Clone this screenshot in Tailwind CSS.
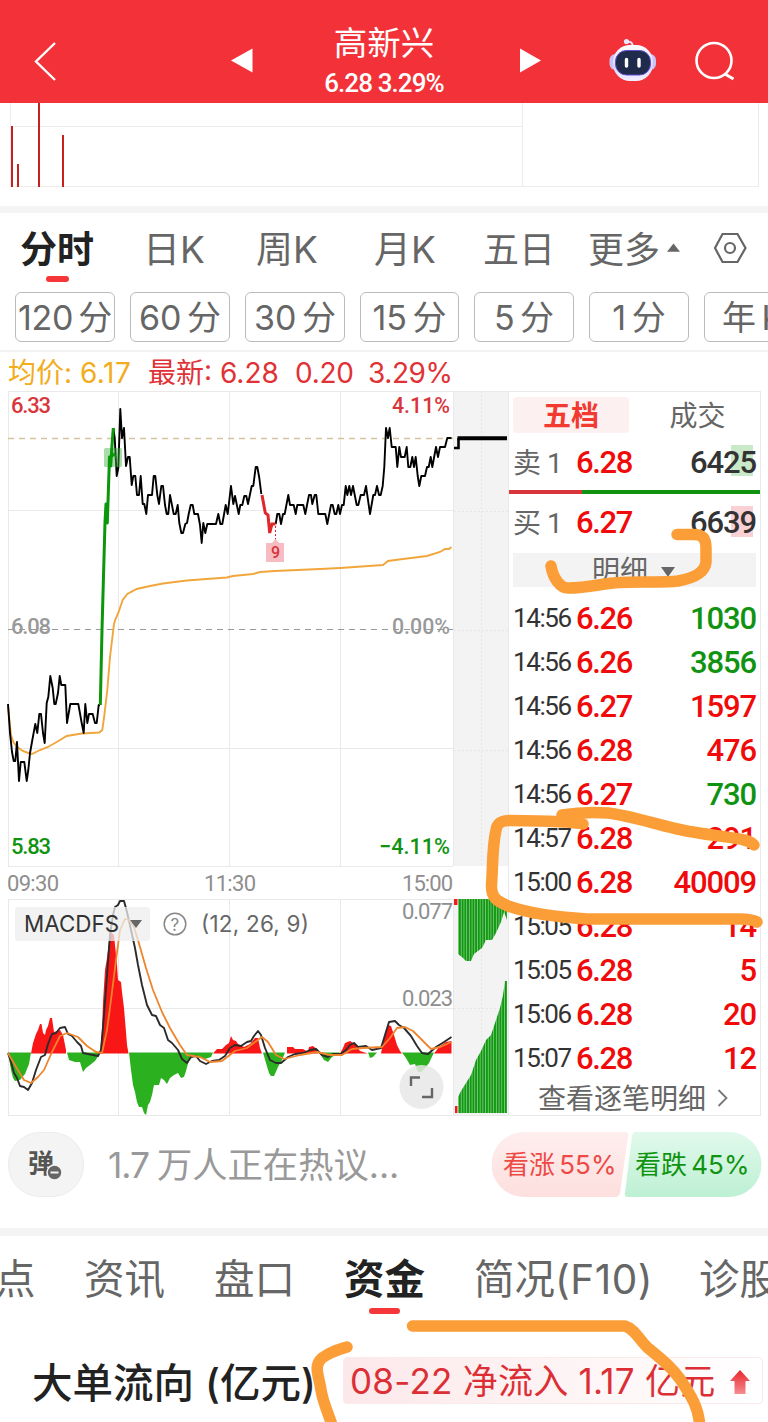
<!DOCTYPE html>
<html lang="zh-CN">
<head>
    <meta charset="UTF-8">
    <meta name="viewport" content="width=device-width, initial-scale=1.0">
    <title>高新兴 6.28 3.29%</title>
    <script src="https://cdn.jsdelivr.net/npm/@tailwindcss/browser@4"></script>
</head>
<body class="relative w-[768px] h-[1422px] overflow-hidden bg-white text-[#666] whitespace-nowrap font-['Inter','Noto_Sans_CJK_SC',sans-serif]">
    <!-- Header -->
    <header class="h-[103px] bg-[#f33138] text-white flex items-center">
        <svg class="w-[60px] h-[103px] ml-5" viewBox="20 0 60 103" fill="none" stroke="#fff" stroke-width="2.4"><path d="M55 43 36 61.500 55 80"/></svg>
        <svg class="w-[24px] h-[103px] ml-[150px]" viewBox="230 0 24 103" fill="#fff"><path d="M231 60.500 252.500 48.500V72.500Z"/></svg>
        <div class="w-[260px] mr-1 flex flex-col items-center">
            <h1 class="text-[33.500px] leading-[40px] font-normal mt-[22px]">高新兴</h1>
            <p class="text-[26px] leading-[40px] font-medium font-['Roboto',sans-serif] tracking-[-0.900px]">6.28 3.29%</p>
        </div>
        <svg class="w-[24px] h-[103px]" viewBox="518 0 24 103" fill="#fff"><path d="M541 60.500 520 48.500V72.500Z"/></svg>
        <svg class="w-[56px] h-[103px] ml-[62px]" viewBox="604 0 56 103">
            <defs>
                <linearGradient id="shell" x1="0" y1="0" x2="0" y2="1"><stop offset="0" stop-color="#fff"/><stop offset=".6" stop-color="#dcd6fb"/><stop offset="1" stop-color="#f3f0ff"/></linearGradient>
            </defs>
            <path d="M633 46C632 42 630 41 627 42" fill="none" stroke="#e4dcfa" stroke-width="2"/>
            <circle cx="626.500" cy="41.500" r="2.600" fill="#e9e6ff"/>
            <rect x="609.500" y="54" width="46.500" height="16" rx="6" fill="#c9c2f7"/>
            <rect x="613" y="45" width="40" height="36" rx="17" fill="url(#shell)"/>
            <rect x="615.500" y="50.500" width="35" height="24.500" rx="11" fill="#202b4c" stroke="#5f4fd0"/>
            <path d="M626.500 59.500V66M639 59.500V66" stroke="#fff" stroke-width="3.400" stroke-linecap="round"/>
        </svg>
        <svg class="w-[50px] h-[103px] ml-[30px]" viewBox="690 0 50 103" fill="none" stroke="#fff" stroke-width="2.600"><circle cx="714" cy="60.500" r="17.500"/><path d="M725 74 733.500 79" stroke-width="3"/></svg>
    </header>

    <!-- Tail of the previous chart -->
    <svg class="block w-full h-[103px]" viewBox="0 103 768 103" shape-rendering="crispEdges">
        <path d="M10.500 103V186.500H758.500V103M522.500 103V186M10 126.500H522" fill="none" stroke="#ececec"/>
        <path d="M11.500 126V187M17.500 164V187M38.500 103V187M62.500 135V187" stroke="#c8201f" stroke-width="2"/>
    </svg>
    <div class="h-[7px] bg-[#f4f4f4]"></div>

    <!-- Period tabs -->
    <nav class="h-[79px] pl-[20px] pt-[12px] grid grid-cols-[123px_113px_118px_109px_105px_125px_54px] text-[37px] leading-[50px]">
        <div class="text-[#222] font-bold">分时<div class="w-[23px] h-[6px] rounded-full bg-[#f5373a] ml-[26px] mt-px"></div></div>
        <div>日K</div>
        <div>周K</div>
        <div>月K</div>
        <div class="text-[36px]">五日</div>
        <div class="flex text-[36px]">更多<svg class="w-[13px] h-[50px] ml-[7px]" viewBox="0 0 14 50" fill="#666"><path d="M7 18 14 27H0Z"/></svg></div>
        <svg class="w-[34px] h-[50px]" viewBox="-0.500 1 34 50" fill="none" stroke="#666" stroke-width="2.200"><path d="M9 10H24L32 24 24 38H9L1.500 24Z"/><circle cx="16.500" cy="24" r="5"/></svg>
    </nav>

    <div class="h-[60px] pl-[15px] flex gap-[15px] border-b-2 border-[#f3f3f3] text-[34px] leading-[49px] text-center [word-spacing:-4px] overflow-hidden">
        <div class="w-[100px] h-[50px] shrink-0 border border-[#bbb] rounded-md flex justify-center tracking-[-0.300px]">120 分</div>
        <div class="w-[100px] h-[50px] shrink-0 border border-[#bbb] rounded-md">60 分</div>
        <div class="w-[100px] h-[50px] shrink-0 border border-[#bbb] rounded-md">30 分</div>
        <div class="w-[99px] h-[50px] shrink-0 border border-[#bbb] rounded-md">15 分</div>
        <div class="w-[100px] h-[50px] shrink-0 border border-[#bbb] rounded-md">5 分</div>
        <div class="w-[100px] h-[50px] shrink-0 border border-[#bbb] rounded-md">1 分</div>
        <div class="w-[100px] h-[50px] shrink-0 border border-[#bbb] rounded-md text-left pl-[17px]">年 K</div>
    </div>

    <div class="h-[39px] pl-2 flex text-[28px] leading-[42px] text-[#e03236]">
        <div class="w-[140px] text-[#f2ac1c]">均价: <span class="tracking-[0.500px]">6.17</span></div>
        <div class="w-[147px]">最新: 6.28</div>
        <div class="w-[73px] tracking-[-0.300px]">0.20</div>
        <div class="tracking-[-0.400px]">3.29%</div>
    </div>

    <main class="flex h-[726px]">
        <!-- Minute chart and MACD -->
        <svg class="w-[508px] h-[726px] shrink-0" viewBox="0 391 508 726" fill="none">
            <defs>
                <pattern id="bars" width="2.700" height="10" patternUnits="userSpaceOnUse"><rect width="2.700" height="10" fill="#7cc67c"/><rect width="1.800" height="10" fill="#0f990f"/></pattern>
            </defs>
            <path d="M454 391H508V866H454ZM454 899H508V1115H454Z" fill="#f3f3f3"/>
            <path d="M8 391.500H508M8 510.500H453M8 748.500H453M8 866.500H453M8.500 391V866M118.500 391V866M229.500 391V866M340.500 391V866M453.500 391V866M8 899.500H508M8 1008.500H453M8 1115.500H508M8.500 899V1115M118.500 899V1115M229.500 899V1115M340.500 899V1115M453.500 899V1115" stroke="#e9e9e9"/>
            <path d="M481.500 391V866M454 511.500H508M454 630.500H508M454 750.500H508M481.500 899V1115M454 1008.500H508" stroke="#e6e6e6" stroke-dasharray="2 2"/>
            <path d="M8 438.500H453" stroke="#d8c3a0" stroke-width="1.400" stroke-dasharray="6 5"/>
            <path d="M8 629.500H453" stroke="#999" stroke-width="1.200" stroke-dasharray="6 5"/>

            <!-- average price -->
            <path d="M8 706 11 735 13.300 742 17.300 747 22.700 751 28.300 753 32 754 40 750 48 747 56.700 742 66.700 736 81.700 733.500 99.300 732.500 102.300 730 104 718 107.300 690 110 657 114 624 115.500 619 118.300 613 122.700 600 127.300 594 136.700 589 150 586 163 583.500 186.700 580.500 226.700 577.500 233 576 253 574 260 572 275 571 320 569 340 568 383 565 388 561 403 559 427 556 440 552 445 549 449 549 451.500 547" stroke="#f1a63c" stroke-width="1.900"/>
            <!-- price -->
            <g stroke="#000" stroke-width="1.900" stroke-linejoin="round">
                <path d="M8 704 10 733 12 752 13.700 761H15.300L17 742 19 781 20.700 762H24.300L26.700 781 28.300 770 30 753 32.700 738 35.300 724 37.300 733 39.300 714H41L43 733 44.700 743 46.700 703 48.300 697 50.300 676 52.700 688 54.300 704H55.700L58 693 59.700 676 61.300 685H65.300L67 723 70.300 704H78.300L81.700 723 83.700 733 85.300 704 87.300 723 89 714H92.700L95 723H96.700L98.700 705H100"/>
                <path d="M113.300 428 114.700 438 116.700 476 118.300 468 120.300 409 122 438 124 428 126 466 128 457H129.700L131.700 485 133.300 476H135.300L137 495H139L140.700 476 142.700 504H144.300L146.300 514 148 495H152L153.700 476H155.300L157.300 495 159 504 161.300 486H163L165 505 166.700 514H168.300L170 495 173.700 514H175.700L177.700 505 179.300 523 181.300 533H183L185.300 524 187 523 188.700 514 190.700 505H192.700L194.300 514H198L200 525 201.700 543 203.300 523 205.300 533 207.300 524H216L218.300 514 220.300 524H222.300L225.700 505 227.700 514 231 486 233.300 504 235 496 238.700 514 240.300 505H242.300L244.300 496H246.300L248 504 251.700 486H253.300L255.700 467H257.300L259.300 478 261.300 494"/>
                <path d="M275.700 524 277.300 514H279.300L281 524 283 514H284.700L288.300 495 290 505H293.700L295.700 514 297.300 505H303.300L305.300 514 309 495H311L312.300 504 314.700 495H316.300L318.300 514H325.300L327.300 524 331 505H332.700L334.700 514H336.300L338.300 505 340 514 342 505H343.700L345.700 486 347.300 495 349.300 486 351 495 353 486 356.700 505H358.300L360.700 495H364L366 486 370 514 373.300 495H375L377 486 379 495H380.700L382.700 486 384.300 467 386 428 388 438 389.700 428 391.700 447H395.700L397.300 467 399.300 447 401 457H404.700L406.700 447 408.300 467H410.300L412.300 457 414 467 415.700 457 417.700 476 419.300 486 421.300 476H425L427 467H428.700L430.700 457 432.300 467 436 447 438 457 440 447H445L447.300 438H451.500"/>
            </g>
            <path d="M454 448H458.500V438" stroke="#000" stroke-width="2.600"/>
            <path d="M457.500 438.300H507" stroke="#000" stroke-width="4"/>
            <rect x="104" y="448" width="18" height="19" rx="1.500" fill="#3fb23f" fill-opacity=".45"/>
            <path d="M100.300 705 102 630 105 522 106 504 107.300 523 109.500 457 110.700 466 112 445 113.300 428" stroke="#0b960b" stroke-width="3" stroke-linejoin="round"/>
            <path d="M112 457 114 454 116 457" stroke="#0b960b" stroke-width="2"/>
            <path d="M262 495 265.300 513 268 515 269.700 533 272 524H275.500" stroke="#e0282c" stroke-width="3"/>
            <path d="M275.500 526V540" stroke="#e0282c" stroke-dasharray="2 2"/>
            <path d="M266 543H272L275.500 539 279 543H284V562H266Z" fill="#f7bcc2"/>

            <!-- MACD histogram -->
            <g fill="#f91616">
                <path d="M31 1053.500 33 1043 36 1034 38 1030 40 1024H41.500L43 1033 45 1035 46 1030 48 1026 50 1018H52L54 1032 60 1030 63 1035 66 1050V1053.500Z"/>
                <path d="M100 1053.500 102 1030 103 1002 105 970 107 958 109 941 111 932 114 935 115 945 117 965 118 980 121 982 122 992 124 1008 126 1032 127 1045 128.500 1053.500Z"/>
                <path d="M213 1053.500 217 1049H222L226 1045 229 1043 231 1036 233 1040 236 1041 238 1044 244 1047 250 1044 255 1038H258L260 1048 262 1053.500Z"/>
                <path d="M287 1053.500V1047H293L295 1049H303L308 1052 309 1047 313 1046 318 1050V1053.500Z"/>
                <path d="M340 1053.500 343 1048 345 1043 350 1041 355 1044 360 1051 368 1053.500Z"/>
                <path d="M381 1053.500 383 1043 385 1035 388 1025 391 1026 394 1035 397 1045 400 1051 402 1053.500Z"/>
                <path d="M434 1053.500 440 1046 446 1042 451.500 1041V1053.500Z"/>
            </g>
            <g fill="#2bb01f">
                <path d="M8 1052.500 11 1070 13 1078 15 1081 20 1080 25 1074 29 1064 31 1052.500Z"/>
                <path d="M67 1052.500 69 1060 75 1062H80L83 1072 86 1068 90 1065 95 1061 99 1055V1052.500Z"/>
                <path d="M129 1052.500 131 1070 133 1085 135 1092 137 1102 139 1107H142L144 1113 146 1115 148 1105 150 1102 152 1095 154 1085H159L161 1078 164 1080 167 1084 170 1078 174 1075 178 1073 181 1078 184 1077 186 1071 189 1060 192 1055 205 1059 211 1057 213 1052.500Z"/>
                <path d="M263 1052.500 266 1063 269 1073 271 1076H274L278 1067 282 1060 285 1052.500Z"/>
                <path d="M319 1052.500 324 1060 328 1062 332 1057 340 1052.500Z"/>
                <path d="M368 1052.500 370 1058 373 1057 377 1052.500Z"/>
                <path d="M402 1052.500 406 1058 410 1065 415 1064 418 1072H421L425 1068 429 1063 434 1052.500Z"/>
            </g>
            <path d="M8 1053 11 1062 14 1073 17 1078 20 1086 24 1087 28 1090 32 1083 36 1070 41 1057 45 1055 48 1044 52 1034 56 1033 60 1028 65 1027 68 1034 72 1036 77 1042 81 1046 83 1053 88 1054 93 1055 98 1056 101 1050 104 1015 107 975 110 935 113 915 115 907 118 905 120 901H124L127 912 131 930 135 948 138 965 142 985 147 1005 152 1015 156 1016 160 1025 164 1028 168 1040 172 1043 178 1050 182 1059 187 1063 191 1057 196 1056 200 1061 206 1064 212 1061 219 1060 225 1056 230 1048 235 1045 241 1046 247 1042 251 1041 254 1036 258 1031 261 1035 265 1048 270 1060 276 1063H281L288 1057 295 1054 303 1053 310 1050 316 1049 322 1055 328 1057 333 1054H341L346 1050 350 1045 354 1043 358 1047 366 1046 372 1050 381 1048 385 1035 389 1022 395 1021 399 1025 404 1028 411 1036 417 1046 422 1053 428 1054 436 1047 444 1042 451.500 1037" stroke="#2b2b2b" stroke-width="1.900" stroke-linejoin="round"/>
            <path d="M8 1053 16 1067 24 1080 31 1083 38 1077 44 1070 52 1052 60 1036 67 1033 78 1037 87 1046 96 1052 102 1053 107 1030 111 1000 116 960 120 930 125 919 129 920 134 927 140 947 146 968 153 990 162 1012 170 1028 180 1045 187 1055 200 1057 210 1062 222 1061 235 1051 247 1048 255 1042 262 1037 268 1042 276 1055 284 1059 300 1055 317 1052 330 1055H342L352 1049 363 1048 382 1047 390 1038 397 1028 405 1027 413 1031 421 1039 431 1049 440 1047 451.500 1042" stroke="#ee842b" stroke-width="1.800" stroke-linejoin="round"/>

            <!-- after-hours volume -->
            <path d="M458 899H507V920L504 912 501 922 496 933 492 940H486L482 948 474 954 471 961H466L463 958 458 954Z" fill="url(#bars)"/>
            <path d="M458 1113V1097L461 1091 466 1083 471 1075 476 1060 481 1051 486 1040 491 1035 496 1020 500 1008 503 995 505 981H507V1113Z" fill="url(#bars)"/>
            <path d="M454 899H457.500V905H454ZM455 1106H457.500V1113H455Z" fill="#f01c1c"/>

            <!-- controls over the indicator -->
            <rect x="15" y="907" width="135" height="34" rx="3" fill="#eee" fill-opacity=".75"/>
            <text x="24" y="932" font-size="23" fill="#333" textLength="95" lengthAdjust="spacingAndGlyphs">MACDFS</text>
            <path d="M130 920H142L136 928Z" fill="#666"/>
            <circle cx="175" cy="924" r="10.800" stroke="#888" stroke-width="1.500"/>
            <text x="170.500" y="930.500" font-size="17" fill="#888">?</text>
            <text x="201" y="932" font-size="22.500" fill="#666" textLength="108">(12, 26, 9)</text>
            <circle cx="421.500" cy="1087" r="22" fill="#e7e7e7" fill-opacity=".85"/>
            <path d="M411 1086V1077.500H420M432 1088V1097H422" stroke="#666" stroke-width="2.400"/>

            <g font-family="Roboto, sans-serif" font-size="22" font-weight="500">
                <text x="11" y="413" fill="#d8363b" textLength="40">6.33</text>
                <text x="392" y="413" fill="#d8363b" textLength="58" lengthAdjust="spacingAndGlyphs">4.11%</text>
                <text x="11" y="634" fill="#999" textLength="40">6.08</text>
                <text x="392" y="634" fill="#999" textLength="58" lengthAdjust="spacingAndGlyphs">0.00%</text>
                <text x="11" y="854" fill="#109310" textLength="40">5.83</text>
                <text x="379" y="854" fill="#109310" textLength="71" lengthAdjust="spacingAndGlyphs">−4.11%</text>
                <g fill="#8e8e8e" font-weight="400">
                    <text x="7" y="891" textLength="52">09:30</text>
                    <text x="204" y="891" textLength="52">11:30</text>
                    <text x="402" y="891" textLength="51">15:00</text>
                    <text x="402" y="919" textLength="51">0.077</text>
                    <text x="402" y="1006" textLength="51">0.023</text>
                </g>
                <text x="271" y="558" font-size="16" fill="#d8363b">9</text>
            </g>
        </svg>

        <!-- Order book and ticks -->
        <section class="w-[253px] h-[725px] border border-[#e9e9e9] pt-[5px] font-['Roboto','Noto_Sans_CJK_SC',sans-serif]">
            <div class="h-[36px] pl-1 flex text-[28px] leading-[40px] text-center">
                <div class="w-[116px] shrink-0 rounded-sm bg-[#fdf0f0] text-[#f23a30] font-bold">五档</div>
                <div class="w-[131px] pl-[6px]">成交</div>
            </div>
            <div class="h-[57px] pt-1 pl-1 pr-1 flex items-center text-[28px]">
                <span class="w-[63px] tracking-[-0.500px]">卖 1</span>
                <span class="text-[31px] font-medium text-[#f00a0a] tracking-[-1.400px]">6.28</span>
                <span class="ml-auto text-[31px] font-medium text-[#333] tracking-[-1.100px]">64<span class="bg-[linear-gradient(#c9e9c9,#c9e9c9)] bg-no-repeat bg-[length:22px_31px] bg-[position:8px_1px]">25</span></span>
            </div>
            <div class="h-1 flex"><div class="w-[73px] bg-[#d8363b]"></div><div class="grow bg-[#109310]"></div></div>
            <div class="h-[59px] pl-1 pr-1 flex items-center text-[28px]">
                <span class="w-[63px] tracking-[-0.500px]">买 1</span>
                <span class="text-[31px] font-medium text-[#f00a0a] tracking-[-1.400px]">6.27</span>
                <span class="ml-auto text-[31px] font-medium text-[#333] tracking-[-1.100px]">66<span class="bg-[linear-gradient(#f9d0d3,#f9d0d3)] bg-no-repeat bg-[length:22px_31px] bg-[position:8px_2px]">39</span></span>
            </div>
            <div class="h-[34px] mx-1 bg-[#f3f3f3] flex pl-[79px] text-[28px] leading-[38px]">明细<svg class="w-[14px] h-[10px] ml-[13px] mt-[14px]" viewBox="0 0 14 10" fill="#666"><path d="M0 0H14L7 10Z"/></svg></div>
            <ul class="mt-[9px] pl-1 pr-1 text-[31px] leading-[45px] font-medium text-[#f00a0a] tracking-[-1.400px]">
                <li class="h-11 flex"><span class="w-[63px] text-[26px] font-normal text-[#333]">14:56</span>6.26<span class="ml-auto tracking-[-1.100px] text-[#109310]">1030</span></li>
                <li class="h-11 flex"><span class="w-[63px] text-[26px] font-normal text-[#333]">14:56</span>6.26<span class="ml-auto tracking-[-1.100px] text-[#109310]">3856</span></li>
                <li class="h-11 flex"><span class="w-[63px] text-[26px] font-normal text-[#333]">14:56</span>6.27<span class="ml-auto tracking-[-1.100px]">1597</span></li>
                <li class="h-11 flex"><span class="w-[63px] text-[26px] font-normal text-[#333]">14:56</span>6.28<span class="ml-auto tracking-[-1.100px]">476</span></li>
                <li class="h-11 flex"><span class="w-[63px] text-[26px] font-normal text-[#333]">14:56</span>6.27<span class="ml-auto tracking-[-1.100px] text-[#109310]">730</span></li>
                <li class="h-11 flex"><span class="w-[63px] text-[26px] font-normal text-[#333]">14:57</span>6.28<span class="ml-auto tracking-[-1.100px]">291</span></li>
                <li class="h-11 flex"><span class="w-[63px] text-[26px] font-normal text-[#333]">15:00</span>6.28<span class="ml-auto tracking-[-1.100px]">40009</span></li>
                <li class="h-11 flex"><span class="w-[63px] text-[26px] font-normal text-[#333]">15:05</span>6.28<span class="ml-auto tracking-[-1.100px]">14</span></li>
                <li class="h-11 flex"><span class="w-[63px] text-[26px] font-normal text-[#333]">15:05</span>6.28<span class="ml-auto tracking-[-1.100px]">5</span></li>
                <li class="h-11 flex"><span class="w-[63px] text-[26px] font-normal text-[#333]">15:06</span>6.28<span class="ml-auto tracking-[-1.100px]">20</span></li>
                <li class="h-11 flex"><span class="w-[63px] text-[26px] font-normal text-[#333]">15:07</span>6.28<span class="ml-auto tracking-[-1.100px]">12</span></li>
            </ul>
            <div class="h-[34px] pl-[29px] flex text-[28px] leading-[39px]">查看逐笔明细<svg class="w-[12px] h-[20px] ml-[11px] mt-[8px]" viewBox="0 0 12 20" fill="none" stroke="#777" stroke-width="1.800"><path d="M1.500 2 9.500 10 1.500 18"/></svg></div>
        </section>
    </main>

    <!-- Discussion bar -->
    <div class="h-[111px] pt-[15px] flex">
        <div class="relative w-[76px] h-[65px] ml-2 rounded-[32px] bg-[#f4f4f4] border border-[#ececec]">
            <span class="absolute left-[19px] top-[14px] text-[26px] leading-[34px] font-bold text-[#555]">弹</span>
            <svg class="absolute left-[37px] top-[31px] w-[17px] h-[17px]" viewBox="0 0 17 17"><circle cx="8.500" cy="8.500" r="7.500" fill="#666" stroke="#f4f4f4" stroke-width="1.500"/><path d="M4.500 8.500H12.500" stroke="#f4f4f4" stroke-width="2"/></svg>
        </div>
        <p class="w-[408px] pl-[24px] text-[35.300px] leading-[68px] text-[#999] [word-spacing:-2px]"><span class="tracking-[-1px]">1.7</span> 万人正在热议...</p>
        <div class="relative w-[270px] h-[65px] flex text-[26px] leading-[66px]">
            <svg class="absolute inset-0 w-[270px] h-[65px]" viewBox="0 0 270 65">
                <defs>
                    <linearGradient id="up" x1="0" y1="0" x2="0" y2="1"><stop offset="0" stop-color="#feeeee"/><stop offset="1" stop-color="#fddfde"/></linearGradient>
                    <linearGradient id="down" x1="0" y1="0" x2="0" y2="1"><stop offset="0" stop-color="#e2f9ec"/><stop offset="1" stop-color="#bdf0d3"/></linearGradient>
                </defs>
                <path d="M32 0H133Q137 0 136 4L128 61Q127 65 123 65H32A32.500 32.500 0 0 1 32 0Z" fill="url(#up)"/>
                <path d="M144 0H237A32.500 32.500 0 0 1 237 65H136Q132 65 133 61L140 4Q140.500 0 144 0Z" fill="url(#down)"/>
            </svg>
            <span class="relative pl-[11px] w-[143px] text-[#ee4a45] [word-spacing:-3px]">看涨 55%</span>
            <span class="relative text-[#109310] [word-spacing:-3px]">看跌 45%</span>
        </div>
    </div>
    <div class="h-2 bg-[#f4f4f4]"></div>

    <!-- Section tabs -->
    <nav class="h-[84px] pt-[18px] flex text-[40.500px] leading-[52px] overflow-hidden">
        <div class="-ml-[5px] w-[89px] shrink-0">点</div>
        <div class="w-[130px] shrink-0">资讯</div>
        <div class="w-[130px] shrink-0">盘口</div>
        <div class="w-[130px] shrink-0 text-[#222] font-bold">资金<div class="w-[31px] h-[6px] rounded-full bg-[#f5373a] ml-[25px] mt-[2px]"></div></div>
        <div class="w-[225px] shrink-0">简况<span class="tracking-[0.500px]">(F10)</span></div>
        <div class="shrink-0">诊股</div>
    </nav>

    <div class="h-[102px] pt-[37px] pl-[32px] flex">
        <h2 class="w-[311px] shrink-0 text-[40.500px] leading-[53px] font-medium text-[#222]">大单流向<span class="ml-[11px]">(亿元)</span></h2>
        <div class="w-[420px] h-[47px] border border-[#fbeaec] rounded-sm bg-linear-to-r from-[#fce8ea] to-white pl-[6px] pt-[2px] flex items-center text-[35px] tracking-[0.250px] text-[#dc2f35]">08-22 净流入 1.17 亿元
            <svg class="w-[20px] h-[24px] ml-[15px]" viewBox="0 0 20 24"><defs><linearGradient id="rise" x1="0" y1="0" x2="0" y2="1"><stop offset="0" stop-color="#e8262c"/><stop offset="1" stop-color="#f58c90"/></linearGradient></defs><path d="M10 0 20 11H15.500V24H4.500V11H0Z" fill="url(#rise)"/></svg>
        </div>
    </div>

    <!-- Hand-drawn marks over the page -->
    <svg class="absolute inset-0 w-[768px] h-[1422px] pointer-events-none" viewBox="0 0 768 1422" fill="none" stroke="#fb9e38" stroke-width="11.500" stroke-linecap="round" stroke-linejoin="round">
        <path d="M551 566C553 578 560 588 568 588 590 588 603 583 620 582.500 640 581 660 583 678 581 695 578 705 572 706 562V548C706 538 702 534.500 694 534.500H677"/>
        <path d="M562 815C580 812 596 812 608 813 635 816 665 828 693 832 715 836 738 838 744 840 749 841 752 843 754 845"/>
        <path d="M583 824C575 822 555 821 510 820.500 500 820.500 497 824 496 830 492 848 493 865 491.500 885 491 898 497 901 508 906 530 914 555 917 587 919H740C749 919 753 920 757 922"/>
        <path d="M412.500 1326H625C635 1329 640 1341 648 1348 664 1361 672 1368 680 1379 692 1397 699 1408 700 1428"/>
        <path d="M347 1347C337 1350 330 1352 322 1358 313 1366 319 1376 321 1390 323 1403 328 1412 333 1428"/>
    </svg>
</body>
</html>
